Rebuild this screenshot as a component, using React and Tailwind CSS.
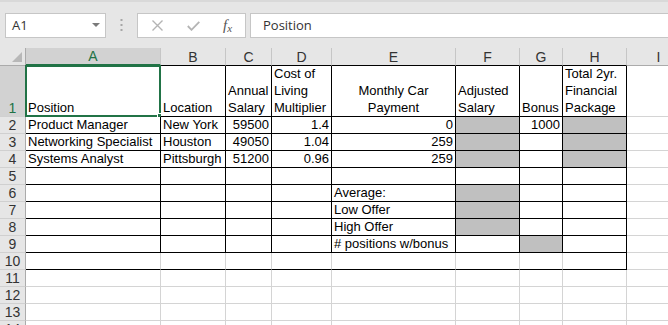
import React from 'react';

const COLS = ['A', 'B', 'C', 'D', 'E', 'F', 'G', 'H', 'I'];
const TABLE_COLS = ['A', 'B', 'C', 'D', 'E', 'F', 'G', 'H'];

// cell content: text (string or array of lines), alignment, fill
const DATA = {
  1: {
    A: { t: ['Position'] },
    B: { t: ['Location'] },
    C: { t: ['Annual', 'Salary'] },
    D: { t: ['Cost of', 'Living', 'Multiplier'] },
    E: { t: ['Monthly Car', 'Payment'], align: 'center' },
    F: { t: ['Adjusted', 'Salary'] },
    G: { t: ['Bonus'] },
    H: { t: ['Total 2yr.', 'Financial', 'Package'] },
  },
  2: {
    A: { t: 'Product Manager' },
    B: { t: 'New York' },
    C: { t: '59500', align: 'right' },
    D: { t: '1.4', align: 'right' },
    E: { t: '0', align: 'right' },
    F: { fill: true },
    G: { t: '1000', align: 'right' },
    H: { fill: true },
  },
  3: {
    A: { t: 'Networking Specialist' },
    B: { t: 'Houston' },
    C: { t: '49050', align: 'right' },
    D: { t: '1.04', align: 'right' },
    E: { t: '259', align: 'right' },
    F: { fill: true },
    H: { fill: true },
  },
  4: {
    A: { t: 'Systems Analyst' },
    B: { t: 'Pittsburgh' },
    C: { t: '51200', align: 'right' },
    D: { t: '0.96', align: 'right' },
    E: { t: '259', align: 'right' },
    F: { fill: true },
    H: { fill: true },
  },
  6: { E: { t: 'Average:' }, F: { fill: true } },
  7: { E: { t: 'Low Offer' }, F: { fill: true } },
  8: { E: { t: 'High Offer' }, F: { fill: true } },
  9: { E: { t: '# positions w/bonus' }, G: { fill: true } },
};

const ROWS = [1, 2, 3, 4, 5, 6, 7, 8, 9, 10, 11, 12, 13, 14];

const Toolbar = () => (
  <div className="h-[48px] bg-[#e6e6e6] border-t-[2px] border-[#d9d9d9] flex items-start pt-[11px] font-['Open_Sans',sans-serif] text-[13px] text-[#333]">
    <div className="ml-[5px] w-[101px] h-[25px] bg-white border border-[#c6c6c6] flex items-center justify-between pl-[6px] pr-[5px]">
      <span>A1</span>
      <svg width="8" height="5" viewBox="0 0 8 5">
        <path d="M0 0 L8 0 L4 4 Z" fill="#7a7a7a" />
      </svg>
    </div>
    <div className="w-[31px] h-[25px] flex items-center justify-center">
      <svg width="3" height="13" viewBox="0 0 3 13">
        <rect x="0.5" y="0" width="2" height="2" fill="#a6a6a6" />
        <rect x="0.5" y="5" width="2" height="2" fill="#a6a6a6" />
        <rect x="0.5" y="10" width="2" height="2" fill="#a6a6a6" />
      </svg>
    </div>
    <div className="w-[109px] h-[25px] bg-white border border-[#c6c6c6] flex items-center">
      <svg className="ml-[14px]" width="11" height="11" viewBox="0 0 11 11">
        <path d="M0.5 0.5 L10.5 10.5 M10.5 0.5 L0.5 10.5" stroke="#b4b4b4" strokeWidth="1.4" />
      </svg>
      <svg className="ml-[24px]" width="13" height="10" viewBox="0 0 13 10">
        <path d="M0.8 5 L4.5 8.8 L12.3 0.8" stroke="#b4b4b4" strokeWidth="1.8" fill="none" />
      </svg>
      <span className="ml-[23px] font-['Liberation_Serif',serif] italic text-[15px] text-[#555] leading-none">
        f<span className="text-[11px] relative top-[2px]">x</span>
      </span>
    </div>
    <div className="ml-[4px] flex-1 h-[25px] bg-white border border-r-0 border-[#c6c6c6] flex items-center pl-[12px]">
      Position
    </div>
  </div>
);

const borderColors = (r, c) => {
  const inTable = r >= 1 && r <= 10 && TABLE_COLS.includes(c);
  const bottom = inTable ? 'border-b-black' : 'border-b-[#d4d4d4]';
  const right = inTable && (r <= 9 || c === 'H') ? 'border-r-black' : 'border-r-[#d4d4d4]';
  return `${bottom} ${right}`;
};

const Cell = ({ r, c }) => {
  const d = (DATA[r] && DATA[r][c]) || {};
  const align =
    d.align === 'right' ? 'justify-end text-right' : d.align === 'center' ? 'justify-center text-center' : 'justify-start text-left';
  const selected = r === 1 && c === 'A';
  return (
    <div
      className={`relative border-r border-b ${borderColors(r, c)} ${d.fill ? 'bg-[#c0c0c0]' : 'bg-white'} ${
        r === 1 ? 'h-[51px]' : 'h-[17px]'
      }`}
    >
      {r === 1 && d.t ? (
        <div className={`absolute inset-x-0 bottom-0 px-[2px] flex flex-col leading-[17px] ${d.align === 'center' ? 'items-center' : 'items-start'}`}>
          {d.t.map((line) => (
            <span key={line} className="whitespace-nowrap">
              {line}
            </span>
          ))}
        </div>
      ) : d.t ? (
        <div className={`h-full flex items-end px-[2px] leading-[16px] whitespace-nowrap overflow-hidden ${align}`}>{d.t}</div>
      ) : null}
      {selected && (
        <div className="absolute -left-[1px] -top-[1px] -right-[1px] -bottom-[1px] border-2 border-[#217346] pointer-events-none">
          <div className="absolute -right-[4px] -bottom-[4px] w-[6px] h-[6px] bg-[#217346] border border-white" />
        </div>
      )}
    </div>
  );
};

const Sheet = () => (
  <div className="grid grid-cols-[26px_135px_65px_46px_60px_124px_64px_43px_64px_64px] w-[691px] font-['Liberation_Sans',Arial,sans-serif] text-[13px] text-black">
    {/* header row */}
    <div className="relative h-[18px] bg-[#e6e6e6] border-r border-b border-[#ababab]">
      <svg className="absolute right-[3px] bottom-[3px]" width="10" height="10" viewBox="0 0 10 10">
        <path d="M10 0 L10 10 L0 10 Z" fill="#b8b8b8" />
      </svg>
    </div>
    {COLS.map((c) => {
      const sel = c === 'A';
      const bottom = sel ? 'border-b-2 border-b-[#217346]' : TABLE_COLS.includes(c) ? 'border-b border-b-black' : 'border-b border-b-[#ababab]';
      return (
        <div
          key={c}
          className={`h-[18px] flex items-center justify-center leading-[16px] text-[14px] border-r border-r-[#c6c6c6] ${bottom} ${
            sel ? 'bg-[#d2d2d2] text-[#217346]' : 'bg-[#e6e6e6] text-[#333]'
          }`}
        >
          {c}
        </div>
      );
    })}
    {ROWS.map((r) => (
      <React.Fragment key={r}>
        <div
          className={`flex items-end justify-center leading-[16px] text-[14px] border-r border-r-[#ababab] border-b border-b-[#d0d0d0] ${
            r === 1 ? 'h-[51px] bg-[#d2d2d2] text-[#217346]' : 'h-[17px] bg-[#e6e6e6] text-[#333]'
          }`}
        >
          {r}
        </div>
        {COLS.map((c) => (
          <Cell key={c} r={r} c={c} />
        ))}
      </React.Fragment>
    ))}
  </div>
);

export default function App() {
  return (
    <div className="w-[668px] h-[325px] overflow-hidden bg-white">
      <Toolbar />
      <Sheet />
    </div>
  );
}
